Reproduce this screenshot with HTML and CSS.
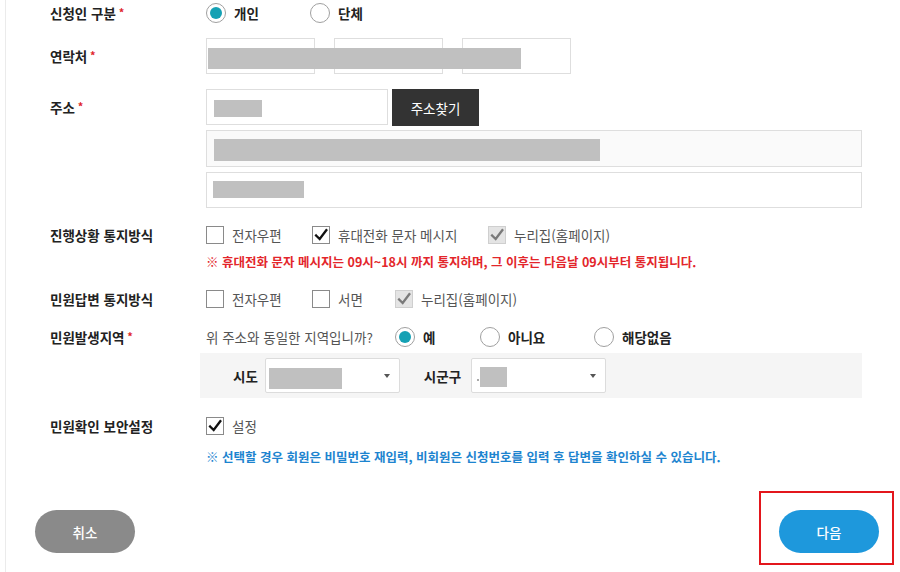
FILE: index.html
```html
<!DOCTYPE html>
<html lang="ko">
<head>
<meta charset="utf-8">
<title>민원신청</title>
<link rel="stylesheet" href="styles.css">
</head>
<body>
<div class="page">
  <div class="form">
    <div class="row r1">
      <div class="label l26">신청인 구분 <span class="req">*</span></div>
      <div class="field">
        <div class="opts">
          <label class="opt w104"><span class="radio on"></span><b>개인</b></label>
          <label class="opt"><span class="radio"></span><b>단체</b></label>
        </div>
      </div>
    </div>

    <div class="row r2">
      <div class="label l36">연락처 <span class="req">*</span></div>
      <div class="field">
        <div class="phone">
          <span class="input pw"></span>
          <span class="input pw"></span>
          <span class="input pw"></span>
          <span class="redact phone-redact"></span>
        </div>
      </div>
    </div>

    <div class="row r3">
      <div class="label l36">주소 <span class="req">*</span></div>
      <div class="field">
        <div class="zip">
          <span class="input zipin"><span class="redact zr"></span></span>
          <button class="btn-dark" type="button">주소찾기</button>
        </div>
        <div class="input addr ro"><span class="redact a1"></span></div>
        <div class="input addr a2box"><span class="redact a2"></span></div>
      </div>
    </div>

    <div class="row r4">
      <div class="label l26">진행상황 통지방식</div>
      <div class="field">
        <div class="opts">
          <label class="opt w106"><span class="chk"></span>전자우편</label>
          <label class="opt w176"><span class="chk on"><svg viewBox="0 0 18 18"><path d="M3.5 9.5 L7.5 13.5 L15 3.5"/></svg></span>휴대전화 문자 메시지</label>
          <label class="opt"><span class="chk dis"><svg viewBox="0 0 18 18"><path d="M3.5 9.5 L7.5 13.5 L15 3.5"/></svg></span>누리집(홈페이지)</label>
        </div>
        <p class="note note-red">※ 휴대전화 문자 메시지는 09시~18시 까지 통지하며, 그 이후는 다음날 09시부터 통지됩니다.</p>
      </div>
    </div>

    <div class="row r5">
      <div class="label l26">민원답변 통지방식</div>
      <div class="field">
        <div class="opts">
          <label class="opt w106"><span class="chk"></span>전자우편</label>
          <label class="opt w83"><span class="chk"></span>서면</label>
          <label class="opt"><span class="chk dis"><svg viewBox="0 0 18 18"><path d="M3.5 9.5 L7.5 13.5 L15 3.5"/></svg></span>누리집(홈페이지)</label>
        </div>
      </div>
    </div>

    <div class="row r6">
      <div class="label l26">민원발생지역 <span class="req">*</span></div>
      <div class="field">
        <div class="opts">
          <span class="q">위 주소와 동일한 지역입니까?</span>
          <label class="opt w85"><span class="radio on"></span><b>예</b></label>
          <label class="opt w114"><span class="radio"></span><b>아니요</b></label>
          <label class="opt"><span class="radio"></span><b>해당없음</b></label>
        </div>
        <div class="panel">
          <span class="plabel">시도</span>
          <span class="select"><span class="redact s1"></span><span class="caret"></span></span>
          <span class="plabel gap">시군구</span>
          <span class="select"><span class="dot"></span><span class="redact s2"></span><span class="caret"></span></span>
        </div>
      </div>
    </div>

    <div class="row r7">
      <div class="label l26">민원확인 보안설정</div>
      <div class="field">
        <div class="opts">
          <label class="opt"><span class="chk on"><svg viewBox="0 0 18 18"><path d="M3.5 9.5 L7.5 13.5 L15 3.5"/></svg></span>설정</label>
        </div>
        <p class="note note-blue">※ 선택할 경우 회원은 비밀번호 재입력, 비회원은 신청번호를 입력 후 답변을 확인하실 수 있습니다.</p>
      </div>
    </div>
  </div>

  <div class="actions">
    <button class="pill pill-gray" type="button">취소</button>
    <div class="next-wrap">
      <button class="pill pill-blue" type="button">다음</button>
      <span class="highlight"></span>
    </div>
  </div>
</div>
</body>
</html>
```
FILE: styles.css
```css
* { box-sizing: border-box; }
html, body { margin: 0; padding: 0; background: #fff; }
body {
  font-family: "Noto Sans CJK KR", "Noto Sans", sans-serif;
  font-size: 13px;
  color: #333;
  width: 900px;
  height: 572px;
  overflow: hidden;
}
.page {
  margin-left: 5px;
  border-left: 1px solid #ebebeb;
  height: 572px;
}
.form { padding-left: 44px; }
.row { display: flex; align-items: flex-start; }
.label {
  width: 156px;
  flex: none;
  font-weight: 700;
  font-size: 13.5px;
  color: #222;
  white-space: nowrap;
}
.l26 { line-height: 26px; height: 26px; }
.l36 { line-height: 36px; height: 36px; }
.req { color: #e0262c; font-size: 11px; line-height: 1; position: relative; top: -2px; margin-left: -1px; }
.field { width: 656px; flex: none; }

.r1 { margin-top: 0; }
.r2 { margin-top: 12px; }
.r3 { margin-top: 15px; }
.r4 { margin-top: 14px; }
.r5 { margin-top: 15px; }
.r6 { margin-top: 12px; }
.r7 { margin-top: 15px; }

.opts { display: flex; align-items: center; height: 26px; }
.opt {
  display: flex;
  align-items: center;
  gap: 8px;
  flex: none;
  font-size: 13.5px;
  line-height: 20px;
  color: #555;
  white-space: nowrap;
}
.opt b { color: #222; font-weight: 700; font-size: 13.5px; }
.w104 { width: 104px; }
.w106 { width: 106px; }
.w176 { width: 176px; }
.w83 { width: 83px; }
.w85 { width: 85px; }
.w114 { width: 114px; }
.q { width: 189px; flex: none; color: #555; font-size: 13.5px; line-height: 20px; }

.radio {
  width: 20px; height: 20px;
  border: 1px solid #a0a0a0;
  border-radius: 50%;
  flex: none;
  display: flex; align-items: center; justify-content: center;
  background: #fff;
}
.radio.on::after {
  content: "";
  width: 12px; height: 12px;
  border-radius: 50%;
  background: #15a1b4;
}
.chk {
  width: 18px; height: 18px;
  border: 1px solid #8a8a8a;
  background: #fff;
  flex: none;
  display: flex; align-items: center; justify-content: center;
}
.chk svg { width: 18px; height: 18px; }
.chk path { fill: none; stroke: #111; stroke-width: 2.6; stroke-linecap: square; }
.chk.dis { background: #e4e4e4; border-color: #cfcfcf; }
.chk.dis path { stroke: #7a7a7a; }

.input {
  display: block;
  border: 1px solid #dedede;
  background: #fff;
  height: 36px;
  position: relative;
}
.redact { display: block; background: #c0c0c0; position: absolute; }

.phone { display: flex; gap: 19px; position: relative; height: 36px; }
.pw { width: 109px; }
.phone-redact { left: 2px; top: 10px; width: 313px; height: 21px; }

.zip { display: flex; align-items: flex-start; gap: 4px; height: 37px; }
.zipin { width: 182px; }
.zr { left: 7px; top: 10px; width: 48px; height: 17px; }
.btn-dark {
  width: 87px; height: 37px;
  border: 0;
  background: #333;
  color: #fff;
  font-family: inherit;
  font-size: 13.5px;
  padding: 0;
}
.addr { width: 656px; margin-top: 4px; }
.ro { height: 37px; background: #fafafa; margin-top: 4px; }
.a1 { left: 7px; top: 8px; width: 386px; height: 22px; }
.a2box { margin-top: 5px; }
.a2 { left: 6px; top: 8px; width: 91px; height: 17px; }

.note { margin: 0; font-size: 12.5px; font-weight: 700; line-height: 18px; height: 18px; white-space: nowrap; }
.note-red { color: #e3262b; margin-top: 5px; }
.note-blue { color: #1d84cf; margin-top: 9px; }

.panel {
  margin-top: 3px;
  margin-left: -6px;
  width: 662px;
  height: 45px;
  background: #f5f5f5;
  display: flex;
  align-items: center;
  padding-left: 33px;
}
.plabel { font-weight: 700; color: #222; font-size: 13.5px; margin-right: 7px; }
.plabel.gap { margin-left: 24px; margin-right: 10px; }
.select {
  width: 135px; height: 35px;
  background: #fff;
  border: 1px solid #dcdcdc;
  border-radius: 2px;
  position: relative;
  display: block;
}
.s1 { left: 3px; top: 9px; width: 73px; height: 21px; }
.s2 { left: 8px; top: 8px; width: 27px; height: 20px; }
.dot { position: absolute; left: 5px; top: 20px; width: 2px; height: 2px; background: #aaa; }
.caret {
  position: absolute;
  right: 9px; top: 15px;
  width: 0; height: 0;
  border-left: 3px solid transparent;
  border-right: 3px solid transparent;
  border-top: 4px solid #555;
}

.actions {
  display: flex;
  justify-content: space-between;
  align-items: flex-start;
  margin-top: 44px;
  padding-left: 29px;
  padding-right: 21px;
}
.pill {
  display: block;
  width: 100px; height: 43px;
  border: 0;
  border-radius: 22px;
  color: #fff;
  font-family: inherit;
  font-size: 13.5px;
  font-weight: 500;
  padding: 0;
}
.pill-gray { background: #8a8a8a; }
.pill-blue { background: #1e98dc; }
.next-wrap { position: relative; display: flex; }
.highlight {
  position: absolute;
  left: -20px; top: -19px;
  width: 135px; height: 74px;
  border: 2px solid #e3161c;
  pointer-events: none;
}
```
